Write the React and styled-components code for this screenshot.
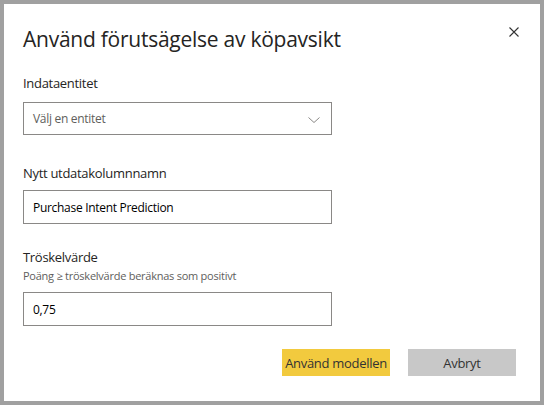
import React from "react";
import styled, { createGlobalStyle } from "styled-components";

const Global = createGlobalStyle`
  html, body { margin: 0; padding: 0; background: #fff; }
  * { box-sizing: border-box; }
  body { font-family: "Open Sans", "Noto Sans", sans-serif; color: #252423; }
`;

const Dialog = styled.div`
  width: 544px;
  height: 405px;
  border: 4px solid #a0a0a0;
  background: #fff;
  display: flex;
  flex-direction: column;
`;

const Header = styled.div`
  display: flex;
  justify-content: space-between;
  align-items: flex-start;
  padding: 21px 21px 0 19px;
`;

const Title = styled.h1`
  margin: 0;
  font-size: 21px;
  line-height: 28px;
  font-weight: 400;
  letter-spacing: -0.25px;
  color: #252423;
`;

const Close = styled.button`
  border: 0;
  background: transparent;
  padding: 0;
  margin-top: 2px;
  width: 10px;
  height: 10px;
  display: flex;
  cursor: pointer;
`;

const Form = styled.div`
  display: flex;
  flex-direction: column;
  padding: 0 0 0 19px;
`;

const Label = styled.label`
  font-size: 13px;
  line-height: 20px;
  letter-spacing: -0.3px;
  color: #252423;
  margin-top: ${(p) => p.$top}px;
`;

const Help = styled.div`
  font-size: 11px;
  line-height: 16px;
  letter-spacing: -0.25px;
  color: #605e5c;
  margin-top: 1px;
`;

const Field = styled.div`
  width: 309px;
  height: ${(p) => p.$h || 34}px;
  margin-top: ${(p) => p.$top}px;
  border: 1px solid #8a8886;
  display: flex;
  align-items: center;
  justify-content: space-between;
  padding: 0 11px 0 9px;
  font-size: 12px;
  letter-spacing: -0.3px;
  color: ${(p) => (p.$placeholder ? "#605e5c" : "#000")};
`;

const Chevron = styled.svg`
  margin-top: 2px;
`;

const Footer = styled.div`
  display: flex;
  justify-content: flex-end;
  gap: 18px;
  padding: 23px 24px 0 0;
`;

const Button = styled.button`
  width: 108px;
  height: 27px;
  border: 0;
  font-family: inherit;
  font-size: 13px;
  letter-spacing: -0.3px;
  white-space: nowrap;
  color: #333;
  background: ${(p) => (p.$primary ? "#f2ca3e" : "#c8c8c8")};
  padding: 0;
`;

export default function App() {
  return (
    <>
      <Global />
      <Dialog>
        <Header>
          <Title>Använd förutsägelse av köpavsikt</Title>
          <Close aria-label="Stäng">
            <svg width="10" height="10" viewBox="0 0 10 10">
              <path d="M0.5 0.5 L9.5 9.5 M9.5 0.5 L0.5 9.5" stroke="#333" strokeWidth="1.1" />
            </svg>
          </Close>
        </Header>
        <Form>
          <Label $top={20}>Indataentitet</Label>
          <Field $top={9} $h={33} $placeholder>
            <span>Välj en entitet</span>
            <Chevron width="12" height="6" viewBox="0 0 12 6">
              <path d="M0.5 0.5 L6 5.5 L11.5 0.5" fill="none" stroke="#8a8886" strokeWidth="1" />
            </Chevron>
          </Field>
          <Label $top={28}>Nytt utdatakolumnnamn</Label>
          <Field $top={7}>Purchase Intent Prediction</Field>
          <Label $top={23}>Tröskelvärde</Label>
          <Help>Poäng ≥ tröskelvärde beräknas som positivt</Help>
          <Field $top={8}>0,75</Field>
        </Form>
        <Footer>
          <Button $primary>Använd modellen</Button>
          <Button>Avbryt</Button>
        </Footer>
      </Dialog>
    </>
  );
}
